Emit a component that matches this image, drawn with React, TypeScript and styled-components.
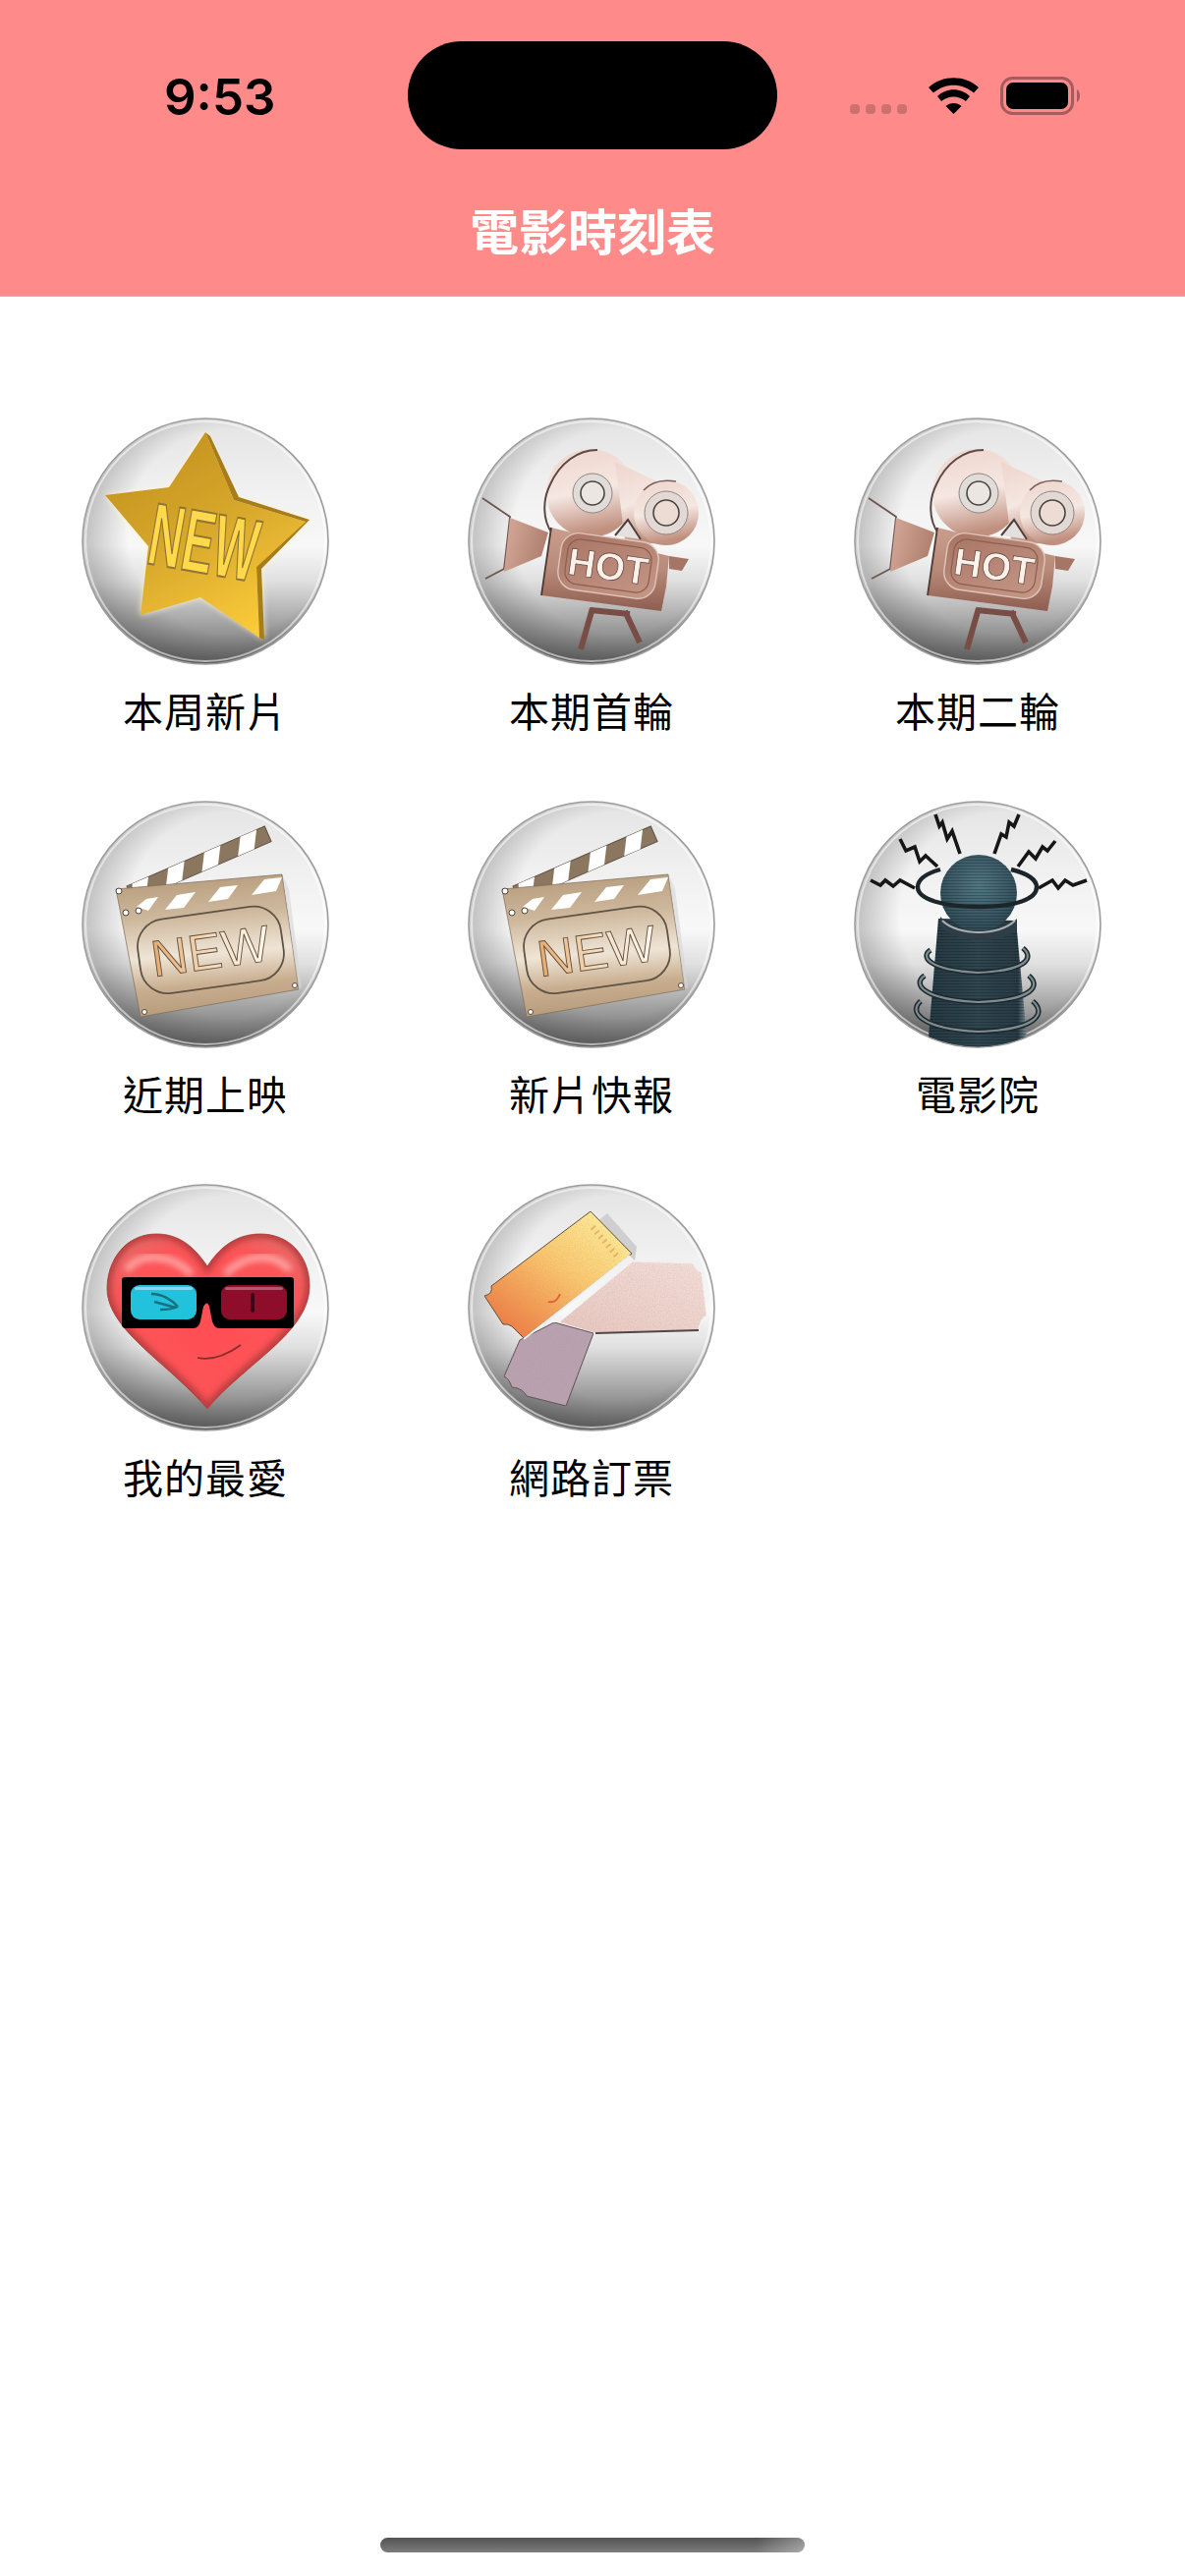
import React from "react";
import styled, { createGlobalStyle } from "styled-components";

const Global = createGlobalStyle`
  html, body { margin: 0; padding: 0; background: #fff; }
  body { font-family: "Noto Sans CJK TC", "Noto Sans", sans-serif; }
`;

const Page = styled.div`
  width: 1206px;
  height: 2622px;
  display: flex;
  flex-direction: column;
  background: #fff;
  overflow: hidden;
`;

const Header = styled.header`
  height: 301px;
  flex: none;
  background: #ff8a8a;
  border-bottom: 1px solid #b9b9b9;
  display: flex;
  flex-direction: column;
`;

const StatusBar = styled.div`
  display: grid;
  grid-template-columns: 415px 376px 1fr;
  padding-top: 42px;
  height: 110px;
`;

const Time = styled.div`
  padding: 31px 0 0 167px;
  font-family: Inter, "Liberation Sans", sans-serif;
  font-weight: 600;
  font-size: 51px;
  line-height: 52px;
  color: #000;
`;

const Island = styled.div`
  height: 110px;
  border-radius: 55px;
  background: #000;
`;

const StatusIcons = styled.div`
  display: flex;
  align-items: flex-start;
  padding: 37px 0 0 74px;
`;

const Dots = styled.div`
  display: flex;
  gap: 6px;
  margin-top: 27px;
  margin-right: 22px;
`;

const Dot = styled.span`
  width: 10px;
  height: 10px;
  border-radius: 4px;
  background: #cc7070;
`;

const Title = styled.h1`
  margin: 51px 0 0;
  text-align: center;
  font-size: 50px;
  line-height: 60px;
  font-weight: 700;
  color: #fff;
`;

const Grid = styled.main`
  flex: 1;
  display: grid;
  grid-template-columns: repeat(3, 393px);
  grid-auto-rows: 390px;
  padding: 123px 0 0 12px;
`;

const Cell = styled.div`
  display: flex;
  flex-direction: column;
  align-items: center;
`;

const DiscSvg = styled.svg`
  width: 252px;
  height: 252px;
  display: block;
`;

const Label = styled.div`
  margin-top: 20px;
  font-size: 41px;
  line-height: 50px;
  font-weight: 400;
  color: #000;
  letter-spacing: 1px;
  text-indent: 1px;
`;

const HomeBar = styled.div`
  flex: none;
  align-self: center;
  width: 432px;
  height: 15px;
  margin-bottom: 24px;
  border-radius: 8px;
  background: linear-gradient(100deg, transparent 88%, rgba(255, 255, 255, 0.35)),
    linear-gradient(180deg, #525252, #7c7c7c);
`;

const BatteryWrap = styled.svg`
  margin: -1px 0 0 22px;
`;

const Disc: React.FC<{ children: React.ReactNode }> = ({ children }) => (
  <DiscSvg viewBox="0 0 252 252">
    <defs>
      <linearGradient id="discFill" x1="0" y1="0" x2="0" y2="1">
        <stop offset="0" stopColor="#e4e4e4" />
        <stop offset="0.28" stopColor="#f0f0f0" />
        <stop offset="0.52" stopColor="#f8f8f8" />
        <stop offset="0.66" stopColor="#e0e0e0" />
        <stop offset="0.82" stopColor="#a8a8a8" />
        <stop offset="1" stopColor="#666666" />
      </linearGradient>
      <radialGradient id="discSide" cx="0.6" cy="0.46" r="0.58">
        <stop offset="0.72" stopColor="#000" stopOpacity="0" />
        <stop offset="1" stopColor="#000" stopOpacity="0.2" />
      </radialGradient>
      <clipPath id="discClip">
        <circle cx="126" cy="126" r="124.5" />
      </clipPath>
      <filter id="soft" x="-5%" y="-5%" width="110%" height="110%">
        <feGaussianBlur stdDeviation="0.7" />
      </filter>
      <filter id="grain" x="0" y="0" width="100%" height="100%">
        <feTurbulence type="fractalNoise" baseFrequency="0.85" numOctaves="2" result="n" />
        <feColorMatrix
          in="n"
          type="matrix"
          values="0 0 0 0 0.4  0 0 0 0 0.25  0 0 0 0 0.25  0 0 0 0.5 -0.18"
          result="g"
        />
        <feComposite in="g" in2="SourceGraphic" operator="in" result="c" />
        <feMerge>
          <feMergeNode in="SourceGraphic" />
          <feMergeNode in="c" />
        </feMerge>
      </filter>
    </defs>
    <g filter="url(#soft)">
      <circle cx="126" cy="126" r="125" fill="url(#discFill)" stroke="#9c9c9c" strokeWidth="1.6" />
      <circle cx="126" cy="126" r="124" fill="url(#discSide)" />
      <circle cx="126" cy="126" r="122" fill="none" stroke="#fff" strokeOpacity="0.55" strokeWidth="2" />
      <g clipPath="url(#discClip)">{children}</g>
    </g>
  </DiscSvg>
);

const StarIcon = () => (
  <Disc>
    <defs>
      <linearGradient id="starFace" x1="0.2" y1="0.05" x2="0.7" y2="1">
        <stop offset="0" stopColor="#c2921f" />
        <stop offset="0.5" stopColor="#d9a92c" />
        <stop offset="1" stopColor="#fbcb3a" />
      </linearGradient>
      <filter id="starGlow" x="-10%" y="-10%" width="120%" height="120%">
        <feGaussianBlur stdDeviation="3" />
      </filter>
    </defs>
    <polygon
      points="126,15 156,83 232,104 183,154 186,226 121,183 60,201 68,131 24,79 89,71"
      fill="#fff6cf"
      opacity="0.9"
      filter="url(#starGlow)"
    />
    <polygon points="126,15 89,71 24,79 68,131 60,201 121,183 181,224 178,152 228,106 155,84" fill="url(#starFace)" />
    <polygon points="126,15 131,19 160,81 232,104 183,154 186,226 181,224 178,152 228,106 155,84" fill="#a87c18" />
    <text
      transform="translate(76,83) rotate(10) scale(0.53,1)"
      x="0"
      y="66"
      fontFamily="'Liberation Sans', sans-serif"
      fontWeight="700"
      fontSize="90"
      fill="#ffd84c"
      stroke="#8f7434"
      strokeWidth="2"
    >
      NEW
    </text>
  </Disc>
);

const CameraIcon = () => (
  <Disc>
    <defs>
      <linearGradient id="reelFill" x1="0" y1="0" x2="0.2" y2="1">
        <stop offset="0" stopColor="#eed5cc" />
        <stop offset="0.55" stopColor="#f5e7e2" />
        <stop offset="1" stopColor="#c08f7e" />
      </linearGradient>
      <linearGradient id="bodyFill" x1="0" y1="0" x2="0" y2="1">
        <stop offset="0" stopColor="#c99d8d" />
        <stop offset="0.5" stopColor="#b98a79" />
        <stop offset="1" stopColor="#8e5d50" />
      </linearGradient>
      <linearGradient id="lensFill" x1="0" y1="0" x2="1" y2="0.3">
        <stop offset="0" stopColor="#d6ab9b" />
        <stop offset="1" stopColor="#b0806f" />
      </linearGradient>
      <linearGradient id="hotFill" x1="0" y1="0" x2="1" y2="1">
        <stop offset="0" stopColor="#a87464" />
        <stop offset="1" stopColor="#c69888" />
      </linearGradient>
    </defs>
    <polyline points="15,82 43,101 37,154 18,164" fill="none" stroke="#6d5650" strokeWidth="1.8" />
    <polygon points="43,102 82,117 75,141 37,157" fill="url(#lensFill)" />
    <circle cx="125" cy="77" r="45" fill="url(#reelFill)" />
    <polygon points="150,45 195,66 205,130 160,125" fill="url(#reelFill)" />
    <path d="M86,118 C76,104 76,84 84,68 C94,46 112,33 132,33" fill="none" stroke="#5c4a45" strokeWidth="2" />
    <circle cx="202" cy="97" r="33" fill="url(#reelFill)" />
    <path d="M179,74 C188,64 200,63 212,65" fill="none" stroke="#7a615a" strokeWidth="1.6" />
    <polygon points="85,112 205,141 202,172 197,197 75,181" fill="url(#bodyFill)" />
    <path d="M150,120 L163,104 L176,124 Z" fill="#e4e0de" />
    <path d="M150,120 L163,104 L176,124" fill="none" stroke="#4f3f3b" strokeWidth="2" />
    <path d="M85,112 L75,181" stroke="#4f3a34" strokeWidth="1.8" fill="none" />
    <circle cx="127" cy="77" r="20" fill="#dfdcda" stroke="#8f8480" strokeWidth="1" />
    <circle cx="127" cy="77" r="12" fill="#ece6e2" stroke="#4c4440" strokeWidth="1.6" />
    <circle cx="202" cy="97" r="22" fill="#e2d9d4" stroke="#8f8480" strokeWidth="1" />
    <circle cx="202" cy="97" r="13" fill="#ecdcd4" stroke="#4c4440" strokeWidth="1.6" />
    <polygon points="205,141 225,144 218,156 205,154" fill="#a57565" />
    <g transform="rotate(8 143 151)">
      <rect x="93" y="122" width="100" height="58" rx="18" fill="url(#hotFill)" stroke="#dec6bb" strokeWidth="1.4" />
      <rect x="100" y="128" width="86" height="46" rx="13" fill="none" stroke="#8a5e50" strokeWidth="1.2" />
      <text
        x="143"
        y="165"
        textAnchor="middle"
        fontFamily="'Liberation Sans', sans-serif"
        fontWeight="700"
        fontSize="39"
        fill="#f9f1ea"
        stroke="#5f4036"
        strokeWidth="0.7"
      >
        HOT
      </text>
    </g>
    <path d="M127,194 L115,236 M160,197 L175,229 M125,196 L165,200" stroke="#784e45" strokeWidth="6" fill="none" />
  </Disc>
);

const ClapperIcon = () => (
  <Disc>
    <defs>
      <linearGradient id="boardFill" x1="0.2" y1="0" x2="0.3" y2="1">
        <stop offset="0" stopColor="#b59a7a" />
        <stop offset="0.3" stopColor="#cdb79b" />
        <stop offset="0.58" stopColor="#efe5d6" />
        <stop offset="0.8" stopColor="#c8ae8f" />
        <stop offset="1" stopColor="#b69b7b" />
      </linearGradient>
      <linearGradient id="newFill" x1="0" y1="0" x2="1" y2="0">
        <stop offset="0" stopColor="#e9a96a" />
        <stop offset="0.5" stopColor="#f3dcc0" />
        <stop offset="1" stopColor="#fff8ee" />
      </linearGradient>
    </defs>
    <g transform="translate(46,87) rotate(-23.5)">
      <rect x="0" y="0" width="153" height="17" fill="#8b7760" stroke="#5f5142" strokeWidth="1" />
      <polygon points="6,0 24,0 14,17 0,17" fill="#fff" />
      <polygon points="46,0 64,0 54,17 36,17" fill="#fff" />
      <polygon points="86,0 104,0 94,17 76,17" fill="#fff" />
      <polygon points="126,0 144,0 134,17 116,17" fill="#fff" />
    </g>
    <polygon points="35,90 204,75 221,192 60,220" fill="url(#boardFill)" stroke="#7b6a57" strokeWidth="0.7" />
    <polygon points="85,111 97,96 116,93 104,109" fill="#fff" />
    <polygon points="129,103 141,88 159,86 149,100" fill="#fff" />
    <polygon points="173,96 186,80 204,78 198,92" fill="#fff" />
    <polygon points="56,108 66,100 78,98 68,112" fill="#fff" />
    <polygon points="205,76 211,90 224,190 221,192" fill="#d5d5d5" opacity="0.6" />
    <circle cx="38" cy="92" r="3" fill="#fff" stroke="#55473a" />
    <circle cx="45" cy="114" r="3" fill="#fff" stroke="#55473a" />
    <circle cx="58" cy="112" r="3" fill="#fff" stroke="#55473a" />
    <circle cx="217" cy="188" r="2.5" fill="#fff" stroke="#55473a" />
    <circle cx="64" cy="215" r="2.5" fill="#fff" stroke="#55473a" />
    <g transform="rotate(-8 131 152)">
      <rect x="58" y="114" width="147" height="76" rx="28" fill="none" stroke="#5f5346" strokeWidth="1.8" />
      <text
        x="131"
        y="171"
        textAnchor="middle"
        fontFamily="'Liberation Sans', sans-serif"
        fontWeight="400"
        fontSize="52"
        fill="url(#newFill)"
        stroke="#5f5040"
        strokeWidth="0.9"
      >
        NEW
      </text>
    </g>
  </Disc>
);

const bolts = [
  "62,89 47,81 40,87 32,81 27,86 17,81",
  "85,67 73,56 67,62 62,47 53,51 47,39",
  "108,54 100,31 95,39 90,22 87,26 83,14",
  "143,54 150,34 155,37 158,22 163,26 168,14",
  "167,67 178,52 185,59 192,47 197,51 205,41",
  "188,89 202,81 208,89 215,81 223,86 237,81",
];

const rings = [
  "M78,152 C68,158 74,172 126,175 C176,173 184,160 172,150",
  "M72,178 C60,186 68,202 126,205 C184,203 190,188 178,178",
  "M68,204 C56,214 66,232 126,235 C188,233 196,216 182,204",
];

const TowerIcon = () => (
  <Disc>
    <defs>
      <linearGradient id="towerFill" x1="0" y1="0" x2="1" y2="0">
        <stop offset="0" stopColor="#263840" />
        <stop offset="0.5" stopColor="#2f4651" />
        <stop offset="0.9" stopColor="#283b44" />
        <stop offset="1" stopColor="#8a979c" />
      </linearGradient>
      <radialGradient id="ballFill" cx="0.5" cy="0.4" r="0.6">
        <stop offset="0" stopColor="#527885" />
        <stop offset="1" stopColor="#2f4a55" />
      </radialGradient>
      <pattern id="scan" width="4" height="3" patternUnits="userSpaceOnUse">
        <rect width="4" height="1" fill="#000" fillOpacity="0.22" />
      </pattern>
    </defs>
    {bolts.map((p) => (
      <polyline key={p} points={p} fill="none" stroke="#161616" strokeWidth="3.6" strokeLinejoin="miter" />
    ))}
    <path d="M86,120 L75,252 L177,252 L165,122 Z" fill="url(#towerFill)" />
    <path d="M86,120 L75,252 L177,252 L165,122 Z" fill="url(#scan)" />
    <path d="M88,118 C104,138 150,138 166,120 L166,132 C150,146 104,146 88,128 Z" fill="#2e3e46" />
    <path d="M90,122 C106,138 148,138 164,122" fill="none" stroke="#a8b0b2" strokeWidth="2" />
    <circle cx="127" cy="94" r="39" fill="url(#ballFill)" />
    <circle cx="127" cy="94" r="39" fill="url(#scan)" />
    <path d="M88,70 C74,74 65,80 65,88 C65,100 90,108 127,108 C165,108 186,100 186,88 C186,80 176,74 160,70" fill="none" stroke="#1e272c" strokeWidth="4.4" />
    {rings.map((d) => (
      <g key={d}>
        <path d={d} fill="none" stroke="#1f2a2f" strokeWidth="5.4" />
        <path d={d} fill="none" stroke="#7f8d93" strokeWidth="2.2" />
      </g>
    ))}
  </Disc>
);

const heartPath =
  "M128,84 C112,60 96,51 76,51 C46,51 26,76 26,107 C26,138 62,166 92,193 C106,206 118,217 128,229 C138,216 152,204 168,190 C198,164 232,138 232,104 C232,74 212,51 182,51 C160,51 142,62 128,84 Z";

const HeartIcon = () => (
  <Disc>
    <defs>
      <radialGradient id="heartFill" cx="0.5" cy="0.55" r="0.62">
        <stop offset="0" stopColor="#ff4f54" />
        <stop offset="0.78" stopColor="#fb5558" />
        <stop offset="1" stopColor="#ea6a68" />
      </radialGradient>
      <filter id="heartBlur" x="-20%" y="-20%" width="140%" height="140%">
        <feGaussianBlur stdDeviation="3" />
      </filter>
      <clipPath id="heartClip">
        <path d={heartPath} />
      </clipPath>
    </defs>
    <path d={heartPath} fill="url(#heartFill)" />
    <g clipPath="url(#heartClip)">
      <path d={heartPath} fill="none" stroke="#b93c3c" strokeWidth="9" filter="url(#heartBlur)" />
      <path d="M46,88 C58,70 90,70 112,92" fill="none" stroke="#ffa6a4" strokeWidth="7" filter="url(#heartBlur)" />
      <path d="M146,92 C168,70 198,70 212,88" fill="none" stroke="#ffa6a4" strokeWidth="7" filter="url(#heartBlur)" />
    </g>
    <path d={heartPath} fill="none" stroke="#a84040" strokeWidth="0.8" />
    <path
      d="M41,98 Q41,95 44,95 L213,95 Q216,95 216,98 L216,143 Q216,147 212,147 L140,147 Q135,147 133,140 L130,125 Q128,118 124,125 L121,140 Q119,147 114,147 L45,147 Q41,147 41,143 Z"
      fill="#060606"
    />
    <rect x="50" y="103" width="67" height="35" rx="9" fill="#22c1dc" />
    <rect x="54" y="105" width="59" height="3" rx="1.5" fill="#7fdcec" />
    <rect x="142" y="103" width="67" height="35" rx="9" fill="#8e0c2c" />
    <rect x="146" y="105" width="59" height="3" rx="1.5" fill="#b65570" />
    <path d="M71,112 C82,112 92,118 98,125 M74,120 L96,126 M80,128 C86,128 92,128 98,125" fill="none" stroke="#17707f" strokeWidth="2.4" />
    <rect x="172" y="111" width="4" height="20" rx="2" fill="#3c0512" />
    <path d="M118,177 C132,180 148,174 162,164" fill="none" stroke="#8a2a2a" strokeWidth="1.6" />
  </Disc>
);

const TicketIcon = () => (
  <Disc>
    <defs>
      <linearGradient id="ticketOrange" x1="0.85" y1="0.1" x2="0.15" y2="0.9">
        <stop offset="0" stopColor="#ffec96" />
        <stop offset="0.45" stopColor="#fcc86c" />
        <stop offset="1" stopColor="#f08040" />
      </linearGradient>
      <linearGradient id="ticketPink" x1="0" y1="1" x2="1" y2="0">
        <stop offset="0" stopColor="#e8c8c0" />
        <stop offset="1" stopColor="#f5dfd9" />
      </linearGradient>
    </defs>
    <polygon points="142,30 172,64 170,78 130,40" fill="#cfcfcf" />
    <path
      d="M168,79 L230,81 Q231,88 238,90 L243,134 Q236,137 235,149 L130,152 L93,141 Z"
      fill="url(#ticketPink)"
      stroke="#f4f4f4"
      strokeWidth="1"
      filter="url(#grain)"
    />
    <path d="M130,152 L235,149" stroke="#4d4645" strokeWidth="2" />
    <path
      d="M88,141 L128,152 L100,226 L60,216 Q56,208 45,207 Q42,198 37,196 L53,159 Z"
      fill="#b9a3b0"
      stroke="#5a4d55"
      strokeWidth="1"
      filter="url(#grain)"
    />
    <path
      d="M125,28 L167,71 L57,157 L45,145 Q40,142 36,143 L17,114 Q26,112 24,104 Z"
      fill="url(#ticketOrange)"
      stroke="#5b4a35"
      strokeWidth="1"
      filter="url(#grain)"
    />
    <path d="M165,73 L57,158" stroke="#efefef" strokeWidth="2.2" />
    <path d="M82,120 Q90,122 94,112" fill="none" stroke="#e0603a" strokeWidth="2" />
    <path d="M127,44 L154,76" stroke="#d99b50" strokeWidth="6" strokeDasharray="2 4" opacity="0.6" />
  </Disc>
);

const items: { label: string; Icon: React.FC }[] = [
  { label: "本周新片", Icon: StarIcon },
  { label: "本期首輪", Icon: CameraIcon },
  { label: "本期二輪", Icon: CameraIcon },
  { label: "近期上映", Icon: ClapperIcon },
  { label: "新片快報", Icon: ClapperIcon },
  { label: "電影院", Icon: TowerIcon },
  { label: "我的最愛", Icon: HeartIcon },
  { label: "網路訂票", Icon: TicketIcon },
];

const WifiIcon = () => (
  <svg width="51" height="37" viewBox="0 0 51 37">
    <path d="M0,10 C14,-3 37,-3 51,10 L46,15.5 C34,5 17,5 5,15.5 Z" fill="#000" />
    <path d="M9,19 C18,10 33,10 42,19 L38,24 C30,18 21,18 13,24 Z" fill="#000" />
    <path d="M17.5,29 C22,25 29,25 33.5,29 L25.5,37 Z" fill="#000" />
  </svg>
);

const BatteryIcon = () => (
  <BatteryWrap width="82" height="39" viewBox="0 0 82 39">
    <rect x="1.5" y="1.5" width="72" height="36" rx="11" fill="none" stroke="#a95a60" strokeWidth="3" />
    <rect x="6" y="6" width="63" height="27" rx="7" fill="#000" />
    <path d="M78,13 C82,15 82,24 78,26 Z" fill="#a95a60" />
  </BatteryWrap>
);

export default function App() {
  return (
    <Page>
      <Global />
      <Header>
        <StatusBar>
          <Time>9:53</Time>
          <Island />
          <StatusIcons>
            <Dots>
              <Dot />
              <Dot />
              <Dot />
              <Dot />
            </Dots>
            <WifiIcon />
            <BatteryIcon />
          </StatusIcons>
        </StatusBar>
        <Title>電影時刻表</Title>
      </Header>
      <Grid>
        {items.map(({ label, Icon }) => (
          <Cell key={label}>
            <Icon />
            <Label>{label}</Label>
          </Cell>
        ))}
      </Grid>
      <HomeBar />
    </Page>
  );
}
